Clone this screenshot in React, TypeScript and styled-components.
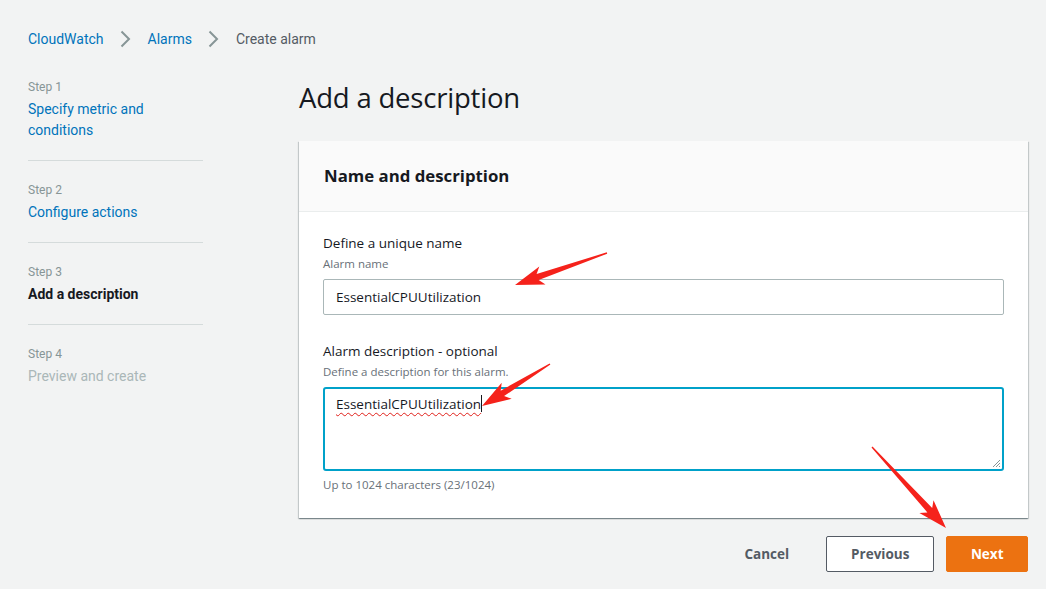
import React from "react";
import styled, { createGlobalStyle } from "styled-components";

const GlobalStyle = createGlobalStyle`
  html, body { margin: 0; padding: 0; background: #f2f3f3; }
  body { font-family: Roboto, "Liberation Sans", Arial, sans-serif; -webkit-font-smoothing: antialiased; }
  * { box-sizing: border-box; }
`;

const Page = styled.div`
  position: relative;
  width: 1046px;
  height: 589px;
  overflow: hidden;
  padding: 29px 18px 0 28px;
  background: #f2f3f3;
`;

const Breadcrumbs = styled.nav`
  display: flex;
  align-items: center;
  gap: 16.5px;
  height: 20px;
  font-size: 14px;
  line-height: 20px;
`;

const Crumb = styled.span<{ $current?: boolean }>`
  color: ${(p) => (p.$current ? "#545b64" : "#0073bb")};
`;

const Layout = styled.div`
  display: grid;
  grid-template-columns: 175px 1fr;
  column-gap: 96px;
  margin-top: 28px;
`;

const Steps = styled.ol`
  list-style: none;
  margin: 0;
  padding: 0;
`;

const StepItem = styled.li`
  padding: 0 0 19px;
  margin-bottom: 19px;
  border-bottom: 1px solid #d5dbdb;
  &:last-child { border-bottom: none; }
`;

const StepLabel = styled.div`
  font-size: 12px;
  line-height: 20px;
  color: #879596;
  margin-bottom: 2px;
`;

const StepTitle = styled.div<{ $state: "link" | "active" | "disabled" }>`
  font-size: 14px;
  line-height: 21px;
  font-weight: ${(p) => (p.$state === "active" ? 700 : 400)};
  color: ${(p) => (p.$state === "link" ? "#0073bb" : p.$state === "active" ? "#16191f" : "#aab7b8")};
`;

const Main = styled.main`
  display: flex;
  flex-direction: column;
  font-family: "Open Sans", "Liberation Sans", Arial, sans-serif;
`;

const Heading = styled.h1`
  margin: 0;
  font-size: 27.5px;
  line-height: 41px;
  font-weight: 400;
  color: #16191f;
  letter-spacing: -0.2px;
`;

const Card = styled.section`
  margin-top: 23px;
  background: #fff;
  box-shadow: 0 1px 1px 0 rgba(0, 28, 36, 0.3), 1px 1px 1px 0 rgba(0, 28, 36, 0.15),
    -1px 1px 1px 0 rgba(0, 28, 36, 0.15);
`;

const CardHeader = styled.header`
  background: #fafafa;
  border-bottom: 1px solid #eaeded;
  padding: 24px 25px 24px;
`;

const CardTitle = styled.h2`
  margin: 0;
  font-size: 16.8px;
  line-height: 22px;
  font-weight: 700;
  color: #16191f;
`;

const CardBody = styled.div`
  padding: 20px 24px 25px;
  display: flex;
  flex-direction: column;
`;

const Field = styled.div<{ $spaced?: boolean }>`
  display: flex;
  flex-direction: column;
  margin-top: ${(p) => (p.$spaced ? "25px" : "0")};
`;

const FieldLabel = styled.label`
  font-size: 13.5px;
  line-height: 22px;
  color: #16191f;
`;

const FieldDesc = styled.div`
  font-size: 11.5px;
  line-height: 16px;
  color: #687078;
  margin-top: 2px;
  margin-bottom: 7px;
`;

const Hint = styled.div`
  font-size: 11.5px;
  line-height: 16px;
  color: #687078;
  margin-top: 6px;
`;

const TextInput = styled.div`
  height: 36px;
  border: 1px solid #aab7b8;
  border-radius: 2px;
  padding: 0 12px;
  display: flex;
  align-items: center;
  font-size: 13.5px;
  color: #16191f;
  background: #fff;
`;

const TextArea = styled.div`
  position: relative;
  height: 84px;
  border: 2px solid #00a1c9;
  border-radius: 3px;
  padding: 4px 11px;
  font-size: 13.5px;
  line-height: 22px;
  color: #16191f;
  background: #fff;
`;

const Misspelled = styled.span`
  text-decoration: underline wavy #e0201a;
  text-decoration-thickness: 1px;
  text-underline-offset: 3px;
`;

const Caret = styled.span`
  display: inline-block;
  width: 1px;
  height: 17px;
  background: #16191f;
  vertical-align: -3px;
`;

const Grip = styled.svg`
  position: absolute;
  right: 1px;
  bottom: 1px;
`;

const Actions = styled.div`
  display: flex;
  justify-content: flex-end;
  align-items: center;
  gap: 12px;
  margin-top: 18px;
`;

const Button = styled.button<{ $variant: "link" | "normal" | "primary" }>`
  height: 36px;
  font-family: "Open Sans", "Liberation Sans", Arial, sans-serif;
  font-size: 13.5px;
  font-weight: 700;
  border-radius: 2px;
  cursor: pointer;
  padding: 0 ${(p) => (p.$variant === "primary" ? "23.5px" : "24px")};
  border: 1px solid
    ${(p) => (p.$variant === "normal" ? "#545b64" : p.$variant === "primary" ? "#ec7211" : "transparent")};
  background: ${(p) => (p.$variant === "primary" ? "#ec7211" : p.$variant === "normal" ? "#fff" : "transparent")};
  color: ${(p) => (p.$variant === "primary" ? "#fff" : "#545b64")};
`;

const Overlay = styled.svg`
  position: absolute;
  left: 0;
  top: 0;
  pointer-events: none;
`;

const Chevron = () => (
  <svg width="11" height="18" viewBox="0 0 11 18" aria-hidden>
    <path d="M1.5 1.5 L9 9 L1.5 16.5" fill="none" stroke="#879596" strokeWidth="2" />
  </svg>
);

function arrowPoints(tx: number, ty: number, hx: number, hy: number) {
  const dx = hx - tx;
  const dy = hy - ty;
  const L = Math.hypot(dx, dy);
  const ux = dx / L;
  const uy = dy / L;
  const nx = -uy;
  const ny = ux;
  const hl = 24;
  const neckW = 3.2;
  const hw = 9.5;
  const back = 5;
  const Nx = hx - ux * hl;
  const Ny = hy - uy * hl;
  const Bx = hx - ux * (hl + back);
  const By = hy - uy * (hl + back);
  const pts = [
    [tx + nx * 0.7, ty + ny * 0.7],
    [Nx + nx * neckW, Ny + ny * neckW],
    [Bx + nx * hw, By + ny * hw],
    [hx, hy],
    [Bx - nx * hw, By - ny * hw],
    [Nx - nx * neckW, Ny - ny * neckW],
    [tx - nx * 0.7, ty - ny * 0.7],
  ];
  return pts.map((p) => p.map((v) => v.toFixed(1)).join(",")).join(" ");
}

const Arrow = ({ t, h }: { t: [number, number]; h: [number, number] }) => (
  <polygon points={arrowPoints(t[0], t[1], h[0], h[1])} fill="#f5221b" />
);

const steps: { label: string; title: string; state: "link" | "active" | "disabled" }[] = [
  { label: "Step 1", title: "Specify metric and conditions", state: "link" },
  { label: "Step 2", title: "Configure actions", state: "link" },
  { label: "Step 3", title: "Add a description", state: "active" },
  { label: "Step 4", title: "Preview and create", state: "disabled" },
];

export default function App() {
  return (
    <>
      <GlobalStyle />
      <Page>
        <Breadcrumbs>
          <Crumb>CloudWatch</Crumb>
          <Chevron />
          <Crumb>Alarms</Crumb>
          <Chevron />
          <Crumb $current>Create alarm</Crumb>
        </Breadcrumbs>
        <Layout>
          <Steps>
            {steps.map((s) => (
              <StepItem key={s.label}>
                <StepLabel>{s.label}</StepLabel>
                <StepTitle $state={s.state}>{s.title}</StepTitle>
              </StepItem>
            ))}
          </Steps>
          <Main>
            <Heading>Add a description</Heading>
            <Card>
              <CardHeader>
                <CardTitle>Name and description</CardTitle>
              </CardHeader>
              <CardBody>
                <Field>
                  <FieldLabel>Define a unique name</FieldLabel>
                  <FieldDesc>Alarm name</FieldDesc>
                  <TextInput>EssentialCPUUtilization</TextInput>
                </Field>
                <Field $spaced>
                  <FieldLabel>Alarm description - optional</FieldLabel>
                  <FieldDesc>Define a description for this alarm.</FieldDesc>
                  <TextArea>
                    <Misspelled>EssentialCPUUtilization</Misspelled>
                    <Caret />
                    <Grip width="10" height="10" viewBox="0 0 10 10" aria-hidden>
                      <path d="M9 2 L2 9 M9 5 L5 9 M9 8 L8 9" stroke="#879596" strokeWidth="1" />
                    </Grip>
                  </TextArea>
                  <Hint>Up to 1024 characters (23/1024)</Hint>
                </Field>
              </CardBody>
            </Card>
            <Actions>
              <Button $variant="link">Cancel</Button>
              <Button $variant="normal">Previous</Button>
              <Button $variant="primary">Next</Button>
            </Actions>
          </Main>
        </Layout>
        <Overlay width="1046" height="589" viewBox="0 0 1046 589">
          <Arrow t={[607, 253]} h={[515, 285]} />
          <Arrow t={[550, 364]} h={[482, 406]} />
          <Arrow t={[872, 447]} h={[946, 528]} />
        </Overlay>
      </Page>
    </>
  );
}
